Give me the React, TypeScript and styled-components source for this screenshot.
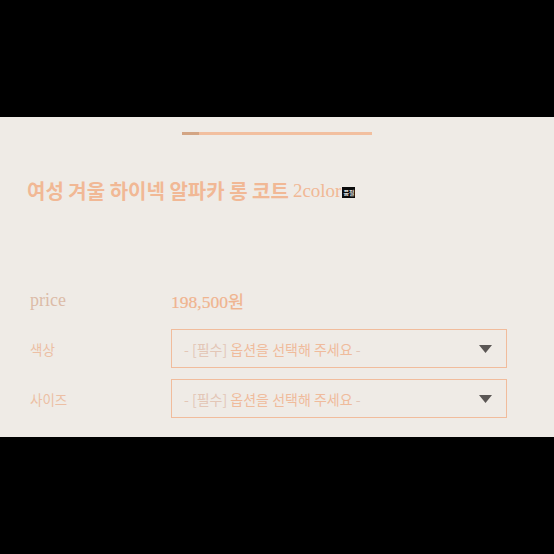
import React from "react";
import styled, { createGlobalStyle } from "styled-components";

const Global = createGlobalStyle`
  html, body { margin: 0; padding: 0; background: #000; }
  body { font-family: "Liberation Serif", "Noto Sans CJK KR", serif; }
`;

const Page = styled.div`
  width: 554px;
  height: 554px;
  background: #000;
  padding-top: 117px;
  box-sizing: border-box;
`;

const Panel = styled.div`
  height: 320px;
  background: #efebe6;
  display: flex;
  flex-direction: column;
  padding: 15px 0 0 0;
  box-sizing: border-box;
`;

const Progress = styled.div`
  align-self: center;
  width: 190px;
  height: 3px;
  background: #f2bf9f;
  display: flex;
`;

const ProgressFill = styled.div`
  height: 100%;
  background: #d3a584;
`;

const Title = styled.h1`
  margin: 44px 0 0 27px;
  font-size: 20px;
  font-weight: 700;
  color: #f1b895;
  display: flex;
  align-items: center;
  line-height: 24px;
  font-family: "Noto Sans CJK KR", sans-serif;
`;

const Latin = styled.span`
  font-family: "Liberation Serif", serif;
  font-weight: 400;
  font-size: 19px;
  margin-left: 4px;
`;

const Badge = styled.span`
  display: inline-flex;
  align-items: center;
  justify-content: center;
  background: #0b0b0b;
  color: #ddd;
  font-family: "Noto Sans CJK KR", sans-serif;
  font-size: 6px;
  font-weight: 700;
  height: 11px;
  width: 13px;
  margin-left: 1px;
  margin-top: 3px;
`;

const Rows = styled.div`
  margin-top: 79px;
  display: flex;
  flex-direction: column;
  gap: 11px;
`;

const Row = styled.div<{ $h?: number }>`
  display: grid;
  grid-template-columns: 141px 336px;
  align-items: center;
  padding-left: 30px;
  min-height: ${(p) => p.$h || 26}px;
`;

const Label = styled.div<{ $serif?: boolean; $c?: string }>`
  font-family: ${(p) => (p.$serif ? `"Liberation Serif", serif` : `"Noto Sans CJK KR", sans-serif`)};
  font-size: ${(p) => (p.$serif ? "18px" : "13.5px")};
  color: ${(p) => p.$c || "#ecbfa4"};
`;

const Price = styled.div`
  font-family: "Liberation Serif", "Noto Sans CJK KR", serif;
  font-size: 17.5px;
  color: #efb48f;
  -webkit-text-stroke: 0.2px #efb48f;
`;

const Select = styled.div`
  height: 39px;
  box-sizing: border-box;
  border: 1.5px solid #f1bc9c;
  display: flex;
  align-items: center;
  justify-content: space-between;
  padding: 0 14px 0 12px;
  font-family: "Noto Sans CJK KR", sans-serif;
  font-size: 14px;
  color: #efbb9c;
`;

const Muted = styled.span`
  color: #e3c6b6;
`;

const Arrow = styled.svg`
  width: 13px;
  height: 8px;
`;

const Chevron = () => (
  <Arrow viewBox="0 0 13 8">
    <path d="M0 0 L13 0 L6.5 8 Z" fill="#5a5654" />
  </Arrow>
);

const Placeholder = () => (
  <span>
    <Muted>- [필수]</Muted> 옵션을 선택해 주세요 <Muted>-</Muted>
  </span>
);

export default function App() {
  return (
    <Page>
      <Global />
      <Panel>
        <Progress>
          <ProgressFill style={{ width: "17px" }} />
        </Progress>
        <Title>
          여성 겨울 하이넥 알파카 롱 코트<Latin>2color</Latin>
          <Badge>품절</Badge>
        </Title>
        <Rows>
          <Row $h={36}>
            <Label $serif $c="#dcbba8">price</Label>
            <Price>198,500원</Price>
          </Row>
          <Row>
            <Label>색상</Label>
            <Select>
              <Placeholder />
              <Chevron />
            </Select>
          </Row>
          <Row>
            <Label>사이즈</Label>
            <Select>
              <Placeholder />
              <Chevron />
            </Select>
          </Row>
        </Rows>
      </Panel>
    </Page>
  );
}
